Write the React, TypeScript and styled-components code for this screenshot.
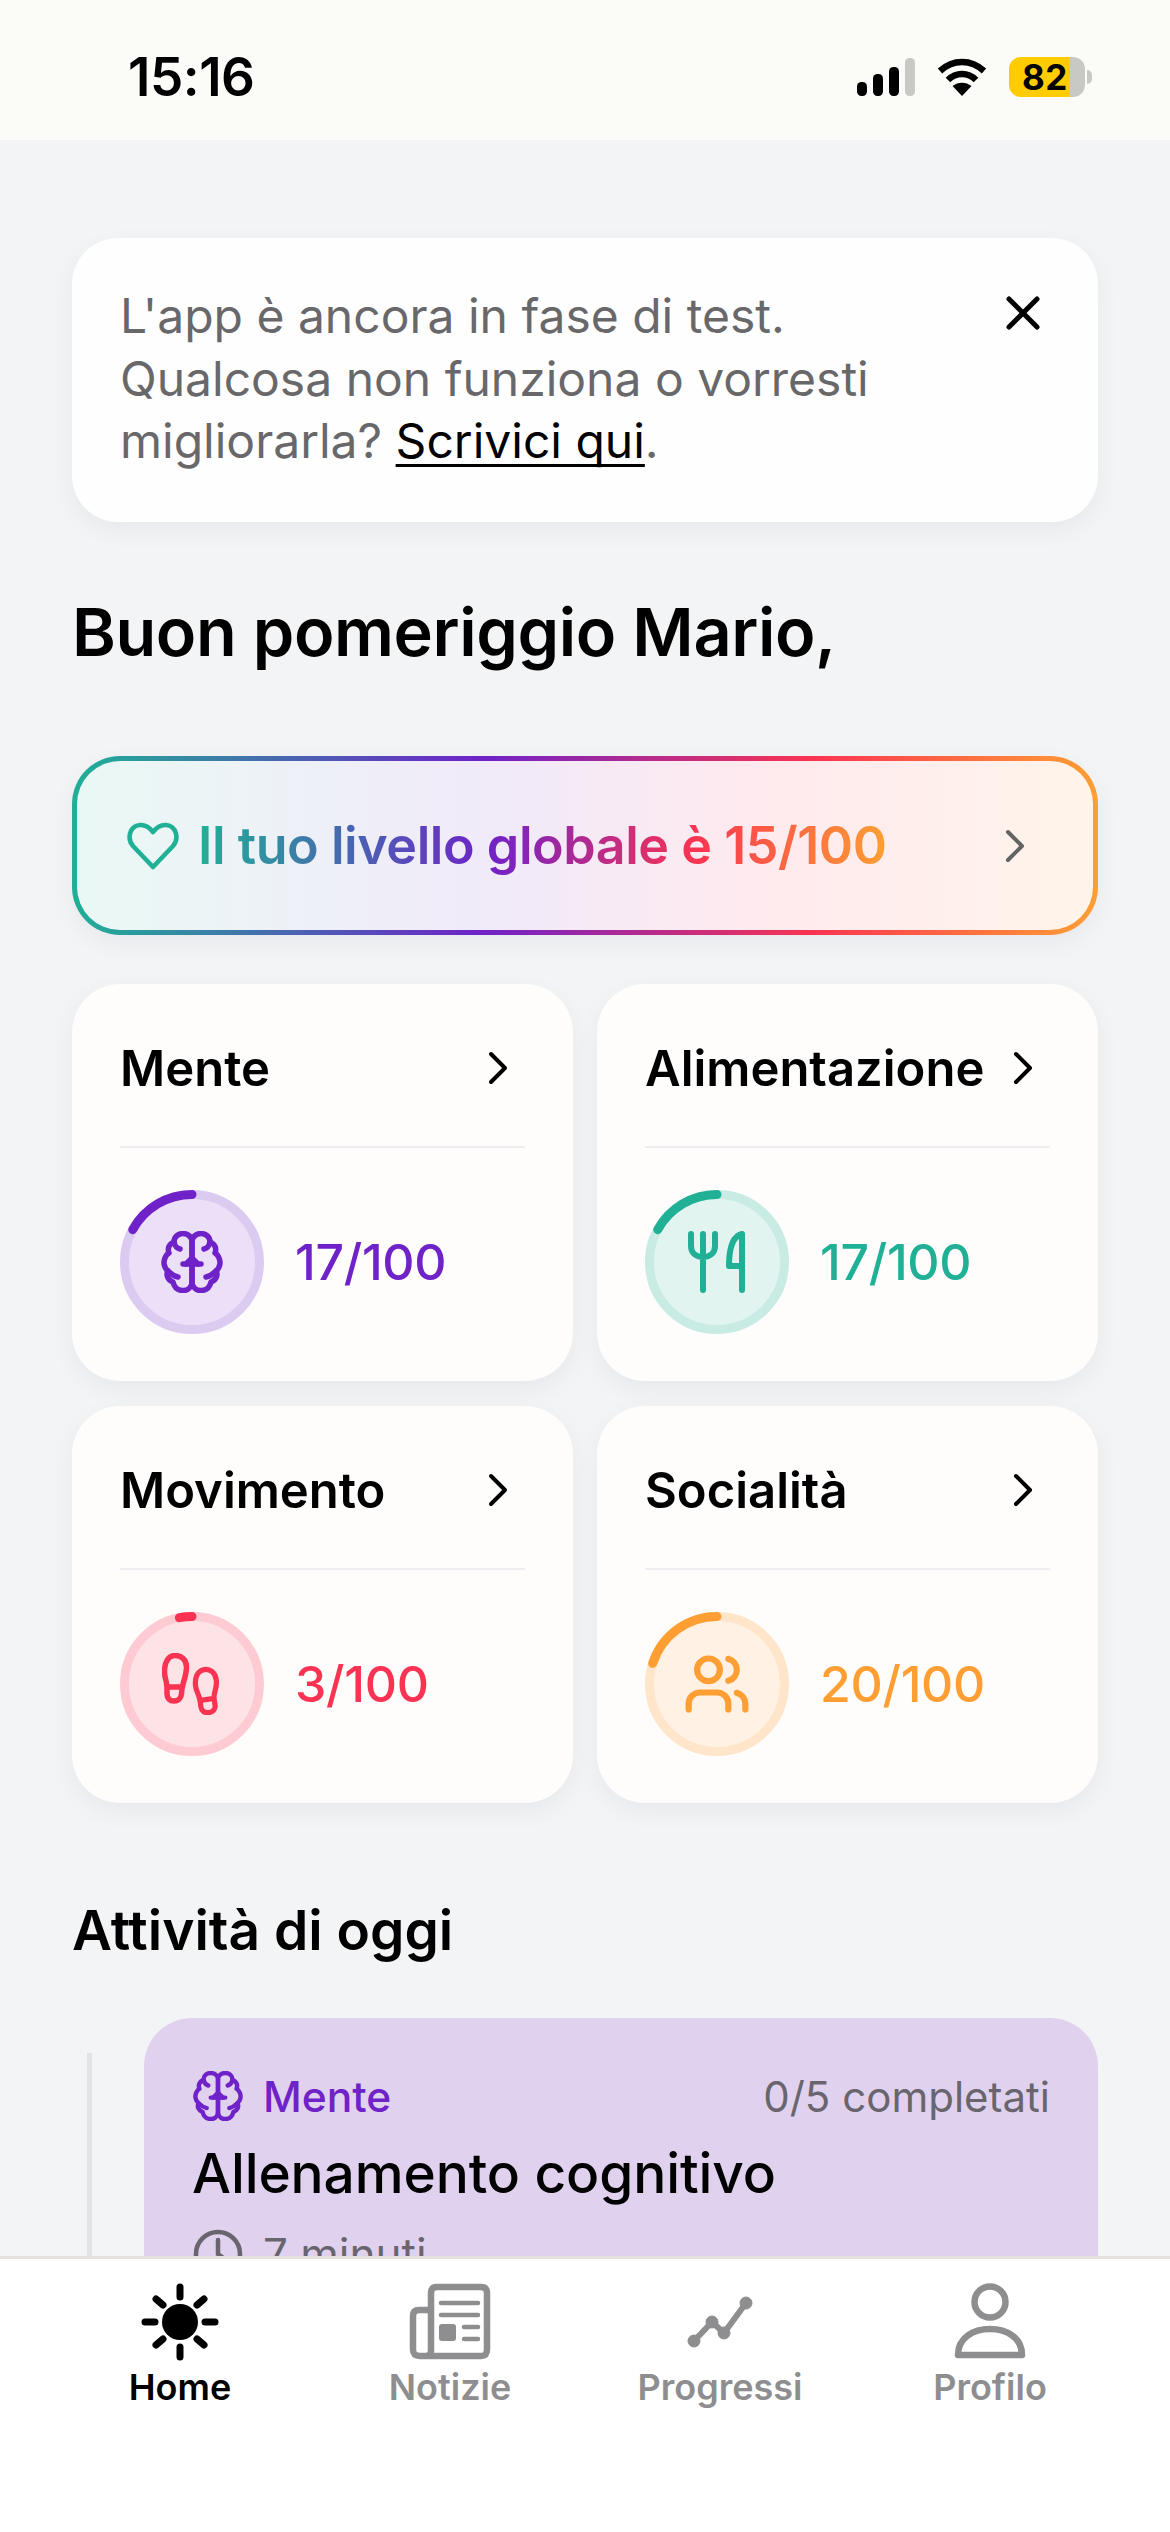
import React from "react";
import styled, { createGlobalStyle } from "styled-components";
import { Users } from "lucide-react";

const Global = createGlobalStyle`
  html, body { margin: 0; padding: 0; background: #f3f4f6; }
  * { box-sizing: border-box; }
  body { font-family: Inter, "Liberation Sans", sans-serif; }
`;

const Screen = styled.div`
  width: 1170px; height: 2532px; display: flex; flex-direction: column; overflow: hidden;
  background: #f3f4f6; color: #000;
`;
const StatusBar = styled.header`
  height: 140px; flex: none; background: #fbfcf8; display: flex; align-items: center;
  justify-content: space-between; padding: 14px 85px 0 128px;
`;
const Clock = styled.div`font-size: 53px; font-weight: 600; letter-spacing: -0.5px; line-height: 1;`;
const StatusIcons = styled.div`display: flex; align-items: center; gap: 22px;`;
const Battery = styled.div`
  width: 76px; height: 40px; border-radius: 12px; position: relative;
  background: linear-gradient(90deg, #ffcc00 80%, #c8c9c5 80%);
  display: flex; align-items: center; justify-content: center; padding-right: 4px;
  font-size: 35px; font-weight: 700; letter-spacing: 0.5px; line-height: 1;
  &::after {
    content: ""; position: absolute; right: -7px; top: 13px; width: 5px; height: 14px;
    border-radius: 0 6px 6px 0; background: #c8c9c5;
  }
`;
const Main = styled.main`
  flex: 1; min-height: 0; overflow: hidden; padding: 98px 72px 0;
`;
const Notice = styled.section`
  height: 284px; background: #fffefe; border-radius: 46px; padding: 47px 58px 0 48px;
  display: flex; justify-content: space-between; align-items: flex-start;
  box-shadow: 0 8px 24px rgba(20, 20, 40, 0.05);
`;
const NoticeText = styled.p`
  margin: 0; font-size: 48px; line-height: 62.7px; color: #68686a; font-weight: 400; white-space: nowrap;
  a {
    color: #000; text-decoration: underline; text-decoration-thickness: 3px;
    text-underline-offset: 6px; text-decoration-skip-ink: none;
  }
`;
const Close = styled.svg`width: 34px; height: 34px; margin-top: 11px; flex: none;`;
const Greeting = styled.h1`
  margin: 70px 0 0; font-size: 66.6px; line-height: 80px; font-weight: 600; letter-spacing: -0.4px;
`;
const GlobalCard = styled.div`
  margin-top: 84px; height: 179px; border-radius: 48px; border: 5px solid transparent;
  background:
    linear-gradient(90deg, #eaf8f5 0%, #f1eaf9 42%, #ffeaee 68%, #fff4ea 100%) padding-box,
    linear-gradient(90deg, #1fb096 0%, #6f22c8 40%, #fa3352 72%, #ff9f33 100%) border-box;
  display: flex; align-items: center; padding: 0 67px 0 50px;
  box-shadow: 0 8px 24px rgba(20, 20, 40, 0.05);
`;
const Heart = styled.svg`width: 52px; height: 48px; flex: none; margin-right: 19px;`;
const GlobalText = styled.span`
  font-size: 52px; font-weight: 600; letter-spacing: -0.45px; white-space: nowrap;
  background: linear-gradient(90deg, #1fb096 0%, #6f22c8 42%, #fa3352 72%, #ff9f33 100%);
  -webkit-background-clip: text; background-clip: text; color: transparent;
`;
const Chevron = styled.svg<{ $tone?: string }>`
  width: 22px; height: 34px; flex: none; margin-left: auto;
  color: ${(p) => p.$tone || "#000"};
`;
const Grid = styled.div`
  margin-top: 49px; display: grid; grid-template-columns: 501px 501px; gap: 25px 24px;
`;
const Card = styled.article`
  height: 397px; background: #fffdfc; border-radius: 48px; padding: 48px 48px 0;
  box-shadow: 0 8px 24px rgba(20, 20, 40, 0.05);
`;
const CardHead = styled.div`
  height: 72px; display: flex; align-items: center; padding-right: 16px;
`;
const CardTitle = styled.h2`margin: 0; font-size: 49px; font-weight: 600; letter-spacing: 0; white-space: nowrap;`;
const Divider = styled.div`margin: 42px 0; height: 2px; background: #eeedef;`;
const Stat = styled.div`display: flex; align-items: center; gap: 31px;`;
const RingBox = styled.div`
  position: relative; width: 144px; height: 144px; flex: none;
  display: flex; align-items: center; justify-content: center;
  > svg:first-child { position: absolute; inset: 0; }
  > svg:last-child { position: relative; }
`;
const Score = styled.span<{ $c: string }>`
  font-size: 50px; font-weight: 500; color: ${(p) => p.$c}; letter-spacing: -0.3px;
`;
const SectionTitle = styled.h2`
  margin: 92px 0 0; font-size: 55px; line-height: 70px; font-weight: 600; letter-spacing: 0;
`;
const Timeline = styled.div`margin-top: 53px; display: flex;`;
const Rail = styled.div`width: 5px; margin: 35px 52px 0 15px; background: #e3e3e6; flex: none;`;
const Activity = styled.article`
  flex: 1; height: 400px; background: #e0d2ee; border-radius: 48px; padding: 42px 48px 0 49px;
`;
const ActivityTop = styled.div`display: flex; align-items: center; height: 72px;`;
const ActivityTag = styled.span`
  font-size: 42.5px; font-weight: 500; color: #6f22c8; margin-left: 20px;
`;
const ActivityCount = styled.span`margin-left: auto; font-size: 42px; color: #69656f;`;
const ActivityTitle = styled.h3`margin: 7px 0 0 -1px; font-size: 55px; line-height: 68px; font-weight: 500; letter-spacing: -0.1px;`;
const Duration = styled.div`
  margin-top: 20px; display: flex; align-items: center; gap: 20px; font-size: 44px; color: #69656f;
`;
const Nav = styled.nav`
  flex: none; height: 276px; background: #fff; border-top: 3px solid #e5e2de;
  padding: 24px 45px 0; display: grid; grid-template-columns: repeat(4, 1fr); align-items: start;
`;
const NavItem = styled.div<{ $active?: boolean }>`
  display: flex; flex-direction: column; align-items: center; gap: 4px;
  color: ${(p) => (p.$active ? "#000" : "#8e8e90")};
`;
const NavLabel = styled.span`font-size: 36px; line-height: 44px; font-weight: 600;`;
const NavIcon = styled.svg`width: 84px; height: 78px; display: block;`;

const Ring = ({ c, track, fill, pct }: { c: string; track: string; fill: string; pct: number }) => {
  const r = 67.5;
  const len = 2 * Math.PI * r;
  const arc = (len * Math.max(pct, 0)) / 100;
  return (
    <svg width="144" height="144" viewBox="0 0 144 144">
      <circle cx="72" cy="72" r={r} fill={fill} stroke={track} strokeWidth="9" />
      <circle
        cx="72" cy="72" r={r} fill="none" stroke={c} strokeWidth="9" strokeLinecap="round"
        strokeDasharray={`${arc} ${len}`}
        transform="rotate(-90 72 72) scale(1 -1) translate(0 -144)"
      />
    </svg>
  );
};

const BrainHalf = () => (
  <>
    <path d="M30 52C29 57 25 60 20 59.5C15 59 12 55.5 11 51C6 49 3.5 44 6 40C2 37 1 31 3 27C4 24.5 5 23 7 22C5 17 7.5 12.5 12 11C12 6 16 2.5 21 2.5C26 2.5 30 6 30 11Z" />
    <path d="M30 33H21M6 40C9 43 11 45 16 46M12 11C13 15 14 17 18 18" />
  </>
);
const Brain = ({ size, c }: { size: number; c: string }) => (
  <svg width={size} height={size} viewBox="0 0 60 62" fill="none" stroke={c} strokeWidth="5.5" strokeLinecap="round" strokeLinejoin="round">
    <BrainHalf />
    <g transform="matrix(-1 0 0 1 60 0)"><BrainHalf /></g>
    <path d="M24 33L30 27L36 33" />
  </svg>
);
const Cutlery = ({ c }: { c: string }) => (
  <svg width="58" height="62" viewBox="0 0 58 62" fill="none" stroke={c} strokeWidth="6" strokeLinecap="round" strokeLinejoin="round">
    <path d="M3 3V15C3 22 8 26 15 26C22 26 27 22 27 15V3M15 3V59" />
    <path d="M54 3V59M54 3C45 5 41 17 41 35H54" />
  </svg>
);
const Feet = ({ c }: { c: string }) => {
  const sole = "M14 2.500C7 2.500 2.500 9 2.500 19C2.500 25 5 28 5 35V41C5 45.500 8 48 12.500 48C17 48 20 45.500 20 41V34C20 28 25 24 25 15C25 7 20 2.500 14 2.500ZM5.500 34H20";
  return (
    <svg width="60" height="62" viewBox="0 0 60 62" fill="none" stroke={c} strokeWidth="5.5" strokeLinecap="round" strokeLinejoin="round">
      <path d="M13 2.500C6.500 2.500 2.500 9 2.500 19C2.500 25 5 28 5 35V41C5 45.500 8 48 12 48C16 48 19 45.500 19.500 41C19.500 32 24 25 24.500 15C25 7 19.500 2.500 13 2.500ZM5.500 34H20" />
      <path d={sole} transform="translate(32 14) rotate(-8 13 24) scale(0.95)" />
    </svg>
  );
};

const Arrow = ({ tone }: { tone?: string }) => (
  <Chevron $tone={tone} viewBox="0 0 22 34" fill="none" stroke="currentColor" strokeWidth="4" strokeLinecap="round" strokeLinejoin="round">
    <path d="M4 3L18 17L4 31" />
  </Chevron>
);

const pillars = [
  { name: "Mente", score: "17/100", pct: 17, c: "#6f22c8", track: "#dccbf1", fill: "#ebe0f8", icon: <Brain size={62} c="#6f22c8" /> },
  { name: "Alimentazione", score: "17/100", pct: 17, c: "#1fb096", track: "#c8ebe3", fill: "#e2f4f0", icon: <Cutlery c="#1fb096" /> },
  { name: "Movimento", score: "3/100", pct: 3, c: "#fa3352", track: "#fecbd3", fill: "#fee3e6", icon: <Feet c="#fa3352" /> },
  { name: "Socialità", score: "20/100", pct: 20, c: "#ff9f33", track: "#ffe5c9", fill: "#fff1e3", icon: <Users size={68} color="#ff9f33" strokeWidth={2.2} /> },
];

export default function App() {
  return (
    <Screen>
      <Global />
      <StatusBar>
        <Clock>15:16</Clock>
        <StatusIcons>
          <svg width="58" height="38" viewBox="0 0 58 38">
            <rect x="0" y="24" width="10" height="14" rx="4.5" fill="#000" />
            <rect x="16" y="16" width="10" height="22" rx="4.5" fill="#000" />
            <rect x="32" y="9" width="10" height="29" rx="4.5" fill="#000" />
            <rect x="48" y="0" width="10" height="38" rx="4.5" fill="#c8c9c5" />
          </svg>
          <svg width="50" height="38" viewBox="0 0 50 38" fill="none" stroke="#000">
            <path d="M3 13C16 1 34 1 47 13" strokeWidth="6.5" />
            <path d="M11 22C19 14 31 14 39 22" strokeWidth="6.5" />
            <path d="M25 38L15.5 28C21 23.5 29 23.5 34.5 28Z" fill="#000" stroke="none" />
          </svg>
          <Battery>82</Battery>
        </StatusIcons>
      </StatusBar>
      <Main>
        <Notice>
          <NoticeText>
            L'app è ancora in fase di test.<br />
            Qualcosa non funziona o vorresti<br />
            migliorarla? <a href="#">Scrivici qui</a>.
          </NoticeText>
          <Close viewBox="0 0 34 34" fill="none" stroke="#000" strokeWidth="5" strokeLinecap="round">
            <path d="M3 3L31 31M31 3L3 31" />
          </Close>
        </Notice>
        <Greeting>Buon pomeriggio Mario,</Greeting>
        <GlobalCard>
          <Heart viewBox="0 0 52 48" fill="none" stroke="#1fb096" strokeWidth="4.6" strokeLinejoin="round">
            <path d="M26 45L6 24C0 17 2 4 13 3C19 2.600 23 6 26 10C29 6 33 2.600 39 3C50 4 52 17 46 24Z" />
          </Heart>
          <GlobalText>Il tuo livello globale è 15/100</GlobalText>
          <Arrow tone="#646464" />
        </GlobalCard>
        <Grid>
          {pillars.map((p) => (
            <Card key={p.name}>
              <CardHead>
                <CardTitle>{p.name}</CardTitle>
                <Arrow />
              </CardHead>
              <Divider />
              <Stat>
                <RingBox>
                  <Ring c={p.c} track={p.track} fill={p.fill} pct={p.pct} />
                  {p.icon}
                </RingBox>
                <Score $c={p.c}>{p.score}</Score>
              </Stat>
            </Card>
          ))}
        </Grid>
        <SectionTitle>Attività di oggi</SectionTitle>
        <Timeline>
          <Rail />
          <Activity>
            <ActivityTop>
              <Brain size={50} c="#6f22c8" />
              <ActivityTag>Mente</ActivityTag>
              <ActivityCount>0/5 completati</ActivityCount>
            </ActivityTop>
            <ActivityTitle>Allenamento cognitivo</ActivityTitle>
            <Duration>
              <svg width="50" height="50" viewBox="0 0 50 50" fill="none" stroke="#69656f" strokeWidth="4.5" strokeLinecap="round">
                <circle cx="25" cy="25" r="22" />
                <path d="M25 11V25L33 31" />
              </svg>
              7 minuti
            </Duration>
          </Activity>
        </Timeline>
      </Main>
      <Nav>
        <NavItem $active>
          <NavIcon viewBox="0 0 84 78" fill="none" stroke="currentColor" strokeWidth="7" strokeLinecap="round">
            <circle cx="42" cy="39" r="18" fill="currentColor" stroke="none" />
            <path d="M42 4V14M42 64V74M7 39H17M67 39H77M18 16L25 22M66 16L59 22M18 62L25 56M66 62L59 56" />
          </NavIcon>
          <NavLabel>Home</NavLabel>
        </NavItem>
        <NavItem>
          <NavIcon viewBox="0 0 84 78" fill="none" stroke="currentColor" strokeLinejoin="round" strokeLinecap="round">
            <path d="M23 68V10C23 6 25 4 29 4H73C77 4 79 6 79 10V66C79 71 77 73 73 73H12C7 73 5 71 5 66V33C5 29 7 27 11 27H23M23 68C23 71 21 73 18 73" strokeWidth="6.500" />
            <path d="M33 20H70M33 32H70M56 44H70M56 56H70" strokeWidth="4.500" />
            <rect x="31" y="41" width="17" height="17" rx="3" fill="currentColor" stroke="none" />
          </NavIcon>
          <NavLabel>Notizie</NavLabel>
        </NavItem>
        <NavItem>
          <NavIcon viewBox="0 0 84 78" fill="currentColor" stroke="currentColor" strokeLinejoin="round">
            <path d="M16 58L34 39L46 50L68 20" fill="none" strokeWidth="6" />
            <circle cx="16" cy="58" r="6" strokeWidth="1" />
            <circle cx="34" cy="39" r="6" strokeWidth="1" />
            <circle cx="46" cy="50" r="6" strokeWidth="1" />
            <circle cx="68" cy="20" r="6" strokeWidth="1" />
          </NavIcon>
          <NavLabel>Progressi</NavLabel>
        </NavItem>
        <NavItem>
          <NavIcon viewBox="0 0 84 78" fill="none" stroke="currentColor" strokeWidth="6.500" strokeLinejoin="round">
            <circle cx="42" cy="19" r="15.500" />
            <path d="M10 72C10 55 25 46 42 46C59 46 74 55 74 72Z" />
          </NavIcon>
          <NavLabel>Profilo</NavLabel>
        </NavItem>
      </Nav>
    </Screen>
  );
}
